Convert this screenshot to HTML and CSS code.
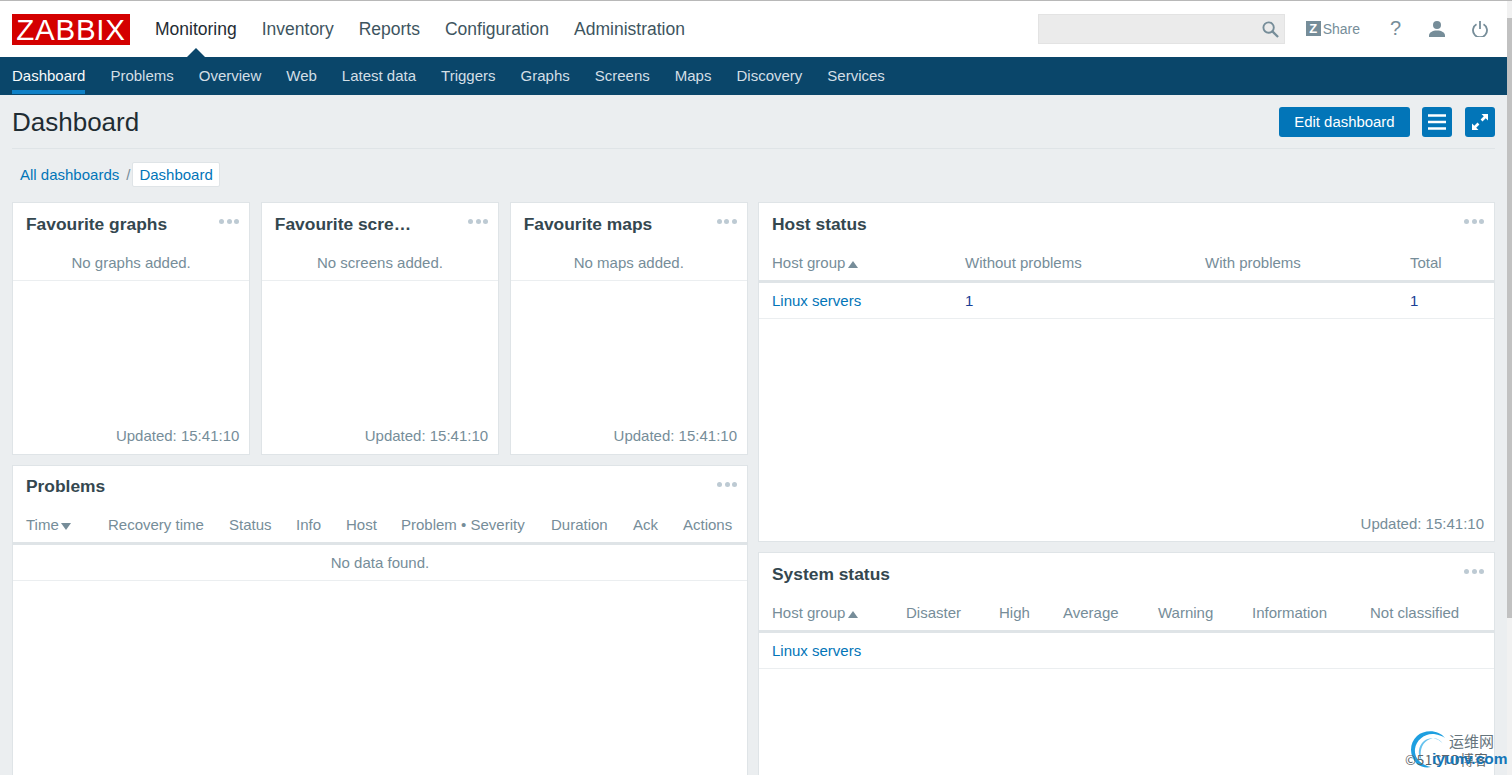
FILE: index.html
```html
<!DOCTYPE html>
<html lang="en">
<head>
<meta charset="utf-8">
<title>Dashboard</title>
<link rel="stylesheet" href="styles.css">
</head>
<body>
<div class="page">
  <header class="top">
    <a class="logo">ZABBIX</a>
    <nav class="topnav">
      <a class="active">Monitoring</a><a>Inventory</a><a>Reports</a><a>Configuration</a><a>Administration</a>
    </nav>
    <div class="tools">
      <div class="search">
        <svg class="search-ico" viewBox="0 0 18 18"><circle cx="7" cy="7" r="5.500" fill="none" stroke="#768d99" stroke-width="2"/><path d="M11 11l6 6" stroke="#768d99" stroke-width="2.400" fill="none"/></svg>
      </div>
      <a class="share"><span class="zbox">Z</span>Share</a>
      <a class="help">?</a>
      <svg class="ico user" viewBox="0 0 16 16"><circle cx="8" cy="4" r="4" fill="#768d99"/><path d="M0 16v-1.500C0 11.500 3.500 9.500 8 9.500s8 2 8 5V16z" fill="#768d99"/></svg>
      <svg class="ico power" viewBox="0 0 16 16"><path d="M4.500 3.200a7 7 0 1 0 7 0" fill="none" stroke="#768d99" stroke-width="1.800"/><path d="M8 0v8" stroke="#768d99" stroke-width="1.800"/></svg>
    </div>
  </header>
  <nav class="subnav">
    <a class="active">Dashboard</a><a>Problems</a><a>Overview</a><a>Web</a><a>Latest data</a><a>Triggers</a><a>Graphs</a><a>Screens</a><a>Maps</a><a>Discovery</a><a>Services</a>
  </nav>
  <main class="content">
    <div class="titlebar">
      <h1>Dashboard</h1>
      <div class="actions">
        <button class="btn">Edit dashboard</button>
        <button class="btn square"><svg viewBox="0 0 18 18"><path d="M0 2.500h18M0 9h18M0 15.500h18" stroke="#fff" stroke-width="2.400"/></svg></button>
        <button class="btn square"><svg viewBox="0 0 18 18"><path d="M10.500 1H17v6.500l-2.300-2.300-3.200 3.200-1.900-1.900 3.200-3.200zM7.500 17H1v-6.500l2.300 2.300 3.200-3.200 1.900 1.900-3.200 3.200z" fill="#fff"/></svg></button>
      </div>
    </div>
    <div class="crumbs"><a>All dashboards</a><span class="sep">/</span><a class="current">Dashboard</a></div>
    <div class="board">
      <div class="col">
        <div class="favs">
          <section class="widget fav">
            <div class="whead"><h2>Favourite graphs</h2><span class="dots"><i></i><i></i><i></i></span></div>
            <div class="empty">No graphs added.</div>
            <div class="updated">Updated: 15:41:10</div>
          </section>
          <section class="widget fav">
            <div class="whead"><h2>Favourite scre…</h2><span class="dots"><i></i><i></i><i></i></span></div>
            <div class="empty">No screens added.</div>
            <div class="updated">Updated: 15:41:10</div>
          </section>
          <section class="widget fav">
            <div class="whead"><h2>Favourite maps</h2><span class="dots"><i></i><i></i><i></i></span></div>
            <div class="empty">No maps added.</div>
            <div class="updated">Updated: 15:41:10</div>
          </section>
        </div>
        <section class="widget grow problems">
          <div class="whead"><h2>Problems</h2><span class="dots"><i></i><i></i><i></i></span></div>
          <table class="data">
            <colgroup><col class="p1"><col class="p2"><col class="p3"><col class="p4"><col class="p5"><col class="p6"><col class="p7"><col class="p8"><col></colgroup>
            <thead><tr><th>Time <span class="arrow down"></span></th><th>Recovery time</th><th>Status</th><th>Info</th><th>Host</th><th>Problem • Severity</th><th>Duration</th><th>Ack</th><th>Actions</th></tr></thead>
            <tbody><tr><td colspan="9" class="none">No data found.</td></tr></tbody>
          </table>
        </section>
      </div>
      <div class="col">
        <section class="widget host">
          <div class="whead"><h2>Host status</h2><span class="dots"><i></i><i></i><i></i></span></div>
          <table class="data">
            <colgroup><col class="h1"><col class="h2"><col class="h3"><col></colgroup>
            <thead><tr><th>Host group <span class="arrow up"></span></th><th>Without problems</th><th>With problems</th><th>Total</th></tr></thead>
            <tbody><tr><td><a>Linux servers</a></td><td><a class="num">1</a></td><td></td><td><a class="num">1</a></td></tr></tbody>
          </table>
          <div class="updated">Updated: 15:41:10</div>
        </section>
        <section class="widget grow">
          <div class="whead"><h2>System status</h2><span class="dots"><i></i><i></i><i></i></span></div>
          <table class="data">
            <colgroup><col class="s1"><col class="s2"><col class="s3"><col class="s4"><col class="s5"><col class="s6"><col></colgroup>
            <thead><tr><th>Host group <span class="arrow up"></span></th><th>Disaster</th><th>High</th><th>Average</th><th>Warning</th><th>Information</th><th>Not classified</th></tr></thead>
            <tbody><tr><td><a>Linux servers</a></td><td></td><td></td><td></td><td></td><td></td><td></td></tr></tbody>
          </table>
        </section>
      </div>
    </div>
  </main>
</div>
<div class="scrollbar"><div class="thumb"></div></div>
<div class="mark">
  <svg class="mark-logo" viewBox="0 0 42 42"><path d="M36 10C30 2 16 1 8 8S0 28 8 36c4 3 9 4 14 3C12 37 5 30 6 21S16 5 25 6c5 1 9 2 11 4z" fill="#1e9fe0"/><path d="M34 16c-4-6-13-8-19-3s-7 14-2 20C10 25 12 16 19 12s12-1 15 4z" fill="#66c2ee"/></svg>
  <span class="mark-cn">运维网</span>
  <span class="mark-grey">©51CTO博客</span>
  <span class="mark-blue">iyunv.com</span>
</div>
</body>
</html>
```
FILE: styles.css
```css
* { box-sizing: border-box; }
html, body { margin: 0; height: 775px; overflow: hidden; }
body {
  display: flex;
  font-family: "Liberation Sans", Arial, sans-serif;
  font-size: 15px;
  color: #1f2c33;
  background: #ebeef0;
  border-top: 1px solid #b8b8b8;
}
a { color: inherit; text-decoration: none; }
.page { flex: 1; min-width: 0; display: flex; flex-direction: column; }
.scrollbar { width: 5px; background: #f1f1f1; padding-top: 17px; }
.thumb { height: 600px; background: #c1c1c1; }

.top { height: 56px; flex: none; background: #fff; display: flex; align-items: center; padding: 0 12px; }
.logo {
  width: 118px; height: 31px; margin-top: 0; background: #d40000; color: #fff;
  font-size: 29.500px; line-height: 31px; text-align: center; letter-spacing: 0.8px;
  flex: none;
}
.topnav { display: flex; gap: 25px; margin-left: 25px; font-size: 17.500px; color: #3e5560; }
.topnav a { position: relative; }
.topnav .active { color: #1f2c33; }
.topnav .active::after {
  content: ""; position: absolute; left: 50%; margin-left: -10px; bottom: -18px;
  border: 10px solid transparent; border-top: 0; border-bottom-color: #0a466a;
}
.tools { margin-left: auto; display: flex; align-items: center; margin-right: 7px; color: #768d99; margin-top: -1px; }
.search { width: 247px; height: 30px; flex: none; background: #ebebeb; border: 1px solid #e3e3e3; position: relative; margin-right: 21px; }
.search-ico { position: absolute; right: 5px; top: 6px; width: 17px; height: 17px; }
.share { display: flex; align-items: center; font-size: 14px; width: 54px; color: #768d99; }
.zbox { width: 15px; height: 15px; background: #768d99; color: #fff; font-weight: bold; font-size: 13px; line-height: 15px; text-align: center; margin-right: 2px; }
.help { font-size: 20px; margin-left: 30px; width: 11px; }
.ico { width: 16px; height: 16px; flex: none; }
.user { margin-left: 28px; }
.power { margin-left: 27px; }

.subnav { height: 38px; flex: none; background: #0a466a; display: flex; gap: 25px; padding: 0 12px; color: #d3dfe6; font-size: 15px; }
.subnav a { height: 37px; line-height: 38px; }
.subnav .active { color: #f8fafb; border-bottom: 4px solid #0f81c7; }

.content { padding: 0 12px; }
.titlebar { height: 54px; border-bottom: 1px solid #dfe4e7; display: flex; justify-content: space-between; align-items: center; padding-top: 1px; }
h1 { margin: 0; font-weight: normal; font-size: 26px; color: #1f2c33; }
.actions { display: flex; gap: 12px; }
.btn { height: 30px; border: 0; border-radius: 3px; background: #0275b8; color: #fff; font: inherit; font-size: 14.900px; padding: 0 15.500px; }
.square { width: 30px; padding: 6px; display: flex; }
.square + .square { margin-left: 1px; }
.square svg { width: 18px; height: 18px; }
.crumbs { height: 53px; display: flex; align-items: center; padding: 0 0 2px 8px; color: #0275b8; font-size: 15px; }
.sep { color: #768d99; margin: 0 2px 0 7px; }
.current { background: #fff; border: 1px solid #dfe4e7; border-radius: 2px; padding: 0 6px; height: 25px; line-height: 24px; }

.board { display: grid; grid-template-columns: 736px 737px; column-gap: 10px; }
.col { display: flex; flex-direction: column; gap: 10px; height: 573px; }
.favs { display: grid; grid-template-columns: repeat(3, 1fr); column-gap: 10.500px; }
.widget { background: #fff; border: 1px solid #dfe4e7; display: flex; flex-direction: column; color: #768d99; }
.fav { height: 253px; }
.fav .updated { padding-bottom: 8px; }
.host { height: 340px; }
.host .updated { padding-bottom: 7px; }
.grow { flex: 1; min-height: 0; border-bottom: 0; }
.whead { height: 42px; flex: none; display: flex; justify-content: space-between; padding: 0 10px 0 13px; align-items: center; }
.problems .whead { height: 41px; }
h2 { margin: 0; font-size: 17.400px; font-weight: bold; color: #34474f; white-space: nowrap; }
.dots { display: flex; gap: 2.500px; margin-top: -5px; }
.dots i { width: 5px; height: 5px; border-radius: 50%; background: #bdcad3; }
.empty { height: 36px; text-align: center; border-bottom: 1px solid #ebeef0; line-height: 36px; }
.updated { margin-top: auto; text-align: right; padding: 0 10px 9px 0; line-height: 20px; }

.data { width: 100%; table-layout: fixed; border-collapse: collapse; }
.data th { font-weight: normal; text-align: left; padding: 0 0 0 13px; height: 36px; border-bottom: 3px solid #dfe4e7; white-space: nowrap; }
.data td { height: 37px; padding: 0 0 0 13px; border-bottom: 1px solid #ebeef0; }
.data td a { color: #0275b8; }
.data td a.num { color: #1a3f96; }
.data td.none { text-align: center; padding: 0; }
.arrow { display: inline-block; margin-left: -2px; border: 5.500px solid transparent; }
.arrow.down { border-bottom: 0; border-top: 7px solid #768d99; }
.arrow.up { border-top: 0; border-bottom: 7px solid #768d99; }

.p1 { width: 82px; } .p2 { width: 121px; } .p3 { width: 67px; } .p4 { width: 50px; }
.p5 { width: 55px; } .p6 { width: 150px; } .p7 { width: 82px; } .p8 { width: 50px; }
.h1 { width: 193px; } .h2 { width: 240px; } .h3 { width: 205px; }
.s1 { width: 134px; } .s2 { width: 93px; } .s3 { width: 64px; } .s4 { width: 95px; } .s5 { width: 94px; } .s6 { width: 118px; }

.mark { position: absolute; left: 1405px; top: 727px; width: 102px; height: 48px; }
.mark-logo { position: absolute; left: 4px; top: 1px; width: 42px; height: 42px; }
.mark-cn { position: absolute; left: 44px; top: 4px; font-family: "Noto Sans CJK SC", sans-serif; font-size: 15px; line-height: 20px; color: #66757d; }
.mark-grey { position: absolute; left: 0; top: 22px; font-family: "Noto Sans CJK SC", sans-serif; font-size: 13.500px; line-height: 20px; color: #5f6568; white-space: nowrap; letter-spacing: 0.5px; }
.mark-blue { position: absolute; left: 27px; top: 22px; font-size: 15.500px; font-weight: bold; line-height: 20px; color: #1576b8; white-space: nowrap; }
```
